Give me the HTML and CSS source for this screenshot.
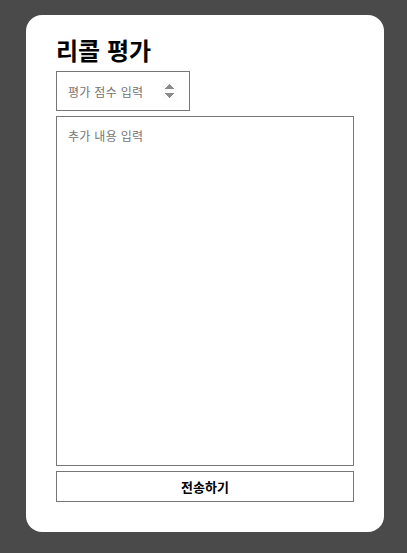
FILE: index.html
```html
<!DOCTYPE html>
<html lang="ko">
<head>
    <meta charset="UTF-8">
    <meta name="viewport" content="width=device-width, initial-scale=1.0">
    <title>리콜 평가</title>
    <link rel="stylesheet" href="styles.css">
</head>
<body>
    <form class="review-card">
        <h2 class="review-title">리콜 평가</h2>
        <input class="score-input" type="number" placeholder="평가 점수 입력">
        <textarea class="review-text" placeholder="추가 내용 입력"></textarea>
        <button class="submit-btn" type="submit">전송하기</button>
    </form>
</body>
</html>
```

FILE: styles.css
```css
body {
    margin: 0;
    padding: 15px 23px 21px 26px;
    background-color: #4a4a4a;
    font-family: "Noto Sans CJK KR", "Noto Sans", sans-serif;
}
.review-card {
    width: 358px;
    height: 517px;
    box-sizing: border-box;
    background-color: #ffffff;
    border-radius: 16px;
    padding: 18px 30px 30px 30px;
    display: flex;
    flex-direction: column;
    gap: 5px;
}
.review-title {
    margin: 0;
    font-size: 24px;
    line-height: 33px;
    font-weight: bold;
    color: #000;
}
.score-input {
    width: 134px;
    height: 40px;
    box-sizing: border-box;
    padding: 0 12px 0 11px;
    border: 1px solid #767676;
    font-family: inherit;
    font-size: 12px;
    letter-spacing: 0.3px;
}
.score-input::-webkit-inner-spin-button {
    opacity: 1;
    height: 18px;
}
.review-text {
    flex: 1;
    box-sizing: border-box;
    padding: 10px 11px;
    border: 1px solid #767676;
    font-family: inherit;
    font-size: 12px;
    letter-spacing: 0.3px;
    resize: none;
}
.score-input::placeholder,
.review-text::placeholder {
    color: #757575;
}
.submit-btn {
    height: 31px;
    background-color: #ffffff;
    border: 1px solid #767676;
    font-family: inherit;
    font-size: 13px;
    font-weight: bold;
    color: #000;
    cursor: pointer;
}
```
